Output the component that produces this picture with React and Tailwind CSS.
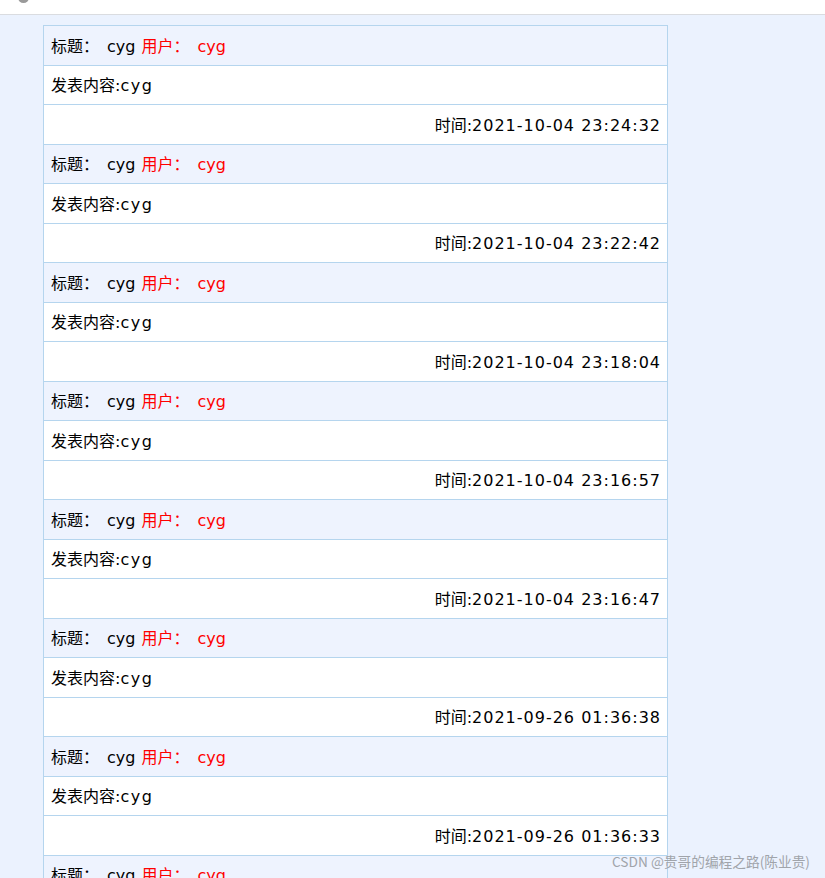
const posts = [
  { title: "cyg", user: "cyg", content: "cyg", time: "2021-10-04 23:24:32" },
  { title: "cyg", user: "cyg", content: "cyg", time: "2021-10-04 23:22:42" },
  { title: "cyg", user: "cyg", content: "cyg", time: "2021-10-04 23:18:04" },
  { title: "cyg", user: "cyg", content: "cyg", time: "2021-10-04 23:16:57" },
  { title: "cyg", user: "cyg", content: "cyg", time: "2021-10-04 23:16:47" },
  { title: "cyg", user: "cyg", content: "cyg", time: "2021-09-26 01:36:38" },
  { title: "cyg", user: "cyg", content: "cyg", time: "2021-09-26 01:36:33" },
  { title: "cyg", user: "cyg", content: "cyg", time: "2021-09-26 01:36:20" },
];

export default function App() {
  return (
    <div className="relative h-[878px] overflow-hidden bg-[#ebf2fe] font-['DejaVu_Sans','Noto_Sans_CJK_SC',sans-serif] text-[16px] text-black">
      <div className="relative h-[15px] border-b border-[#dadce0] bg-white">
        <div className="absolute left-[18px] top-[-8px] h-[11px] w-[11px] rounded-full bg-[#9a9a9a]" />
      </div>
      <div className="ml-[43px] mt-[10px] w-[625px] border-x border-t border-[#b5d5ee]">
        {posts.map((p, i) => (
          <div key={i}>
            <div className="flex h-[39.5px] items-center border-b border-[#b5d5ee] bg-[#eef3fe] pl-[7px] pt-[3px]">
              <span>标题：</span>
              <span className="ml-[8px]">{p.title}</span>
              <span className="ml-[6px] text-[#ff0000]">用户：</span>
              <span className="ml-[8px] text-[#ff0000]">{p.user}</span>
            </div>
            <div className="flex h-[39.5px] items-center border-b border-[#b5d5ee] bg-white pl-[7px] pt-[3px]">
              <span>发表内容:</span>
              <span className="tracking-[1.5px]">{p.content}</span>
            </div>
            <div className="flex h-[39.5px] items-center justify-end border-b border-[#b5d5ee] bg-white pr-[6px] pt-[3px]">
              <span>时间:</span>
              <span className="tracking-[1px]">{p.time}</span>
            </div>
          </div>
        ))}
      </div>
      <div className="absolute left-[612px] top-[851px] font-['Noto_Sans_CJK_SC',sans-serif] text-[13.7px] text-[#a0a4aa]">
        CSDN @贵哥的编程之路(陈业贵)
      </div>
    </div>
  );
}
